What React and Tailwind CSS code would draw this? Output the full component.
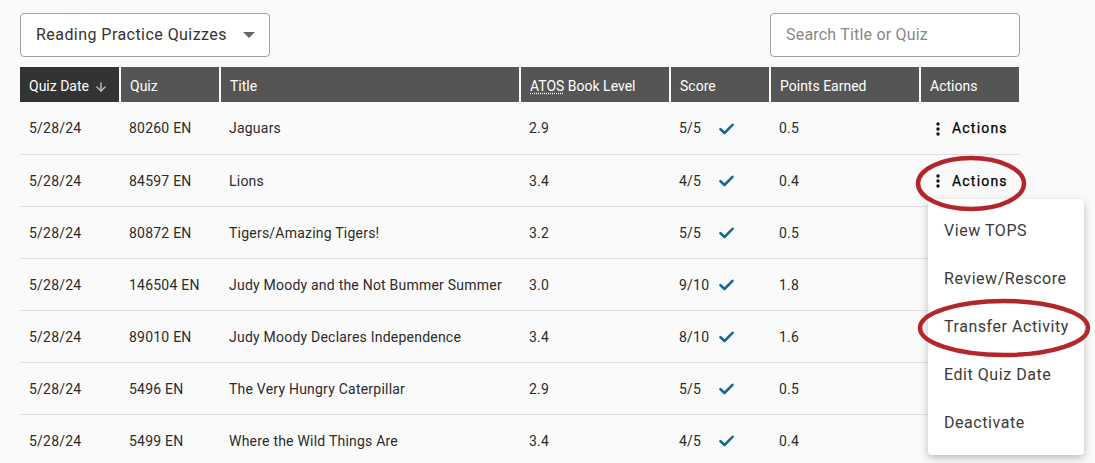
import { ArrowDown } from "lucide-react";

const rows = [
  { date: "5/28/24", quiz: "80260 EN", title: "Jaguars", level: "2.9", score: "5/5", points: "0.5" },
  { date: "5/28/24", quiz: "84597 EN", title: "Lions", level: "3.4", score: "4/5", points: "0.4" },
  { date: "5/28/24", quiz: "80872 EN", title: "Tigers/Amazing Tigers!", level: "3.2", score: "5/5", points: "0.5" },
  { date: "5/28/24", quiz: "146504 EN", title: "Judy Moody and the Not Bummer Summer", level: "3.0", score: "9/10", points: "1.8" },
  { date: "5/28/24", quiz: "89010 EN", title: "Judy Moody Declares Independence", level: "3.4", score: "8/10", points: "1.6" },
  { date: "5/28/24", quiz: "5496 EN", title: "The Very Hungry Caterpillar", level: "2.9", score: "5/5", points: "0.5" },
  { date: "5/28/24", quiz: "5499 EN", title: "Where the Wild Things Are", level: "3.4", score: "4/5", points: "0.4" },
];

const menuItems = ["View TOPS", "Review/Rescore", "Transfer Activity", "Edit Quiz Date", "Deactivate"];

const Check = () => (
  <svg width="15" height="12" viewBox="0 0 15 12" className="shrink-0">
    <path d="M1.5 6.2 L5.5 10 L13.5 1.8" fill="none" stroke="#1d6896" strokeWidth="2.6" strokeLinecap="round" strokeLinejoin="round" />
  </svg>
);

const Kebab = () => (
  <svg width="4" height="14" viewBox="0 0 4 14" className="shrink-0">
    <circle cx="2" cy="2" r="1.7" fill="#111" />
    <circle cx="2" cy="7" r="1.7" fill="#111" />
    <circle cx="2" cy="12" r="1.7" fill="#111" />
  </svg>
);

const App = () => {
  const th = "h-[35px] pl-[9px] pt-[4px] text-left font-normal text-[14px] text-white border-r-2 border-[#fafafa]";
  const td = "pl-[9px] pt-[2px] text-[14px] tracking-[0.22px] text-[#2b2b2b]";

  return (
    <div className="relative w-[1095px] h-[463px] overflow-hidden bg-[#fafafa] px-5 pt-[13px] font-['Roboto',sans-serif]">
      {/* Top controls */}
      <div className="flex w-[1000px] items-center justify-between">
        <div className="flex h-[44px] w-[250px] items-center justify-between rounded-[4px] border border-[#a0a0a0] bg-white pl-[15px] pr-[14px]">
          <span className="text-[16px] text-[#333] tracking-[0.45px]">Reading Practice Quizzes</span>
          <svg width="12" height="6" viewBox="0 0 12 6">
            <path d="M0 0 L12 0 L6 6 Z" fill="#666" />
          </svg>
        </div>
        <div className="flex h-[44px] w-[250px] items-center rounded-[4px] border border-[#a0a0a0] bg-white pl-[15px]">
          <span className="text-[16px] text-[#888] tracking-[0.2px]">Search Title or Quiz</span>
        </div>
      </div>

      {/* Table */}
      <table className="mt-[10px] w-[1000px] table-fixed border-collapse">
        <colgroup>
          <col className="w-[100px]" />
          <col className="w-[100px]" />
          <col className="w-[300px]" />
          <col className="w-[150px]" />
          <col className="w-[100px]" />
          <col className="w-[150px]" />
          <col className="w-[100px]" />
        </colgroup>
        <thead>
          <tr className="bg-[#555]">
            <th className={`${th} bg-[#333]`}>
              <span className="flex items-center gap-[5px]">
                Quiz Date
                <ArrowDown size={14} strokeWidth={2.5} className="text-[#bdbdbd]" />
              </span>
            </th>
            <th className={th}>Quiz</th>
            <th className={th}>Title</th>
            <th className={th}>
              <span className="underline decoration-dotted underline-offset-2">ATOS</span> Book Level
            </th>
            <th className={th}>Score</th>
            <th className={th}>Points Earned</th>
            <th className={`${th} border-r-0`}>Actions</th>
          </tr>
        </thead>
        <tbody>
          {rows.map((r, i) => (
            <tr key={i} className="h-[52px] border-b border-[#e0e0e0]">
              <td className={td}>{r.date}</td>
              <td className={td}>{r.quiz}</td>
              <td className={td}>{r.title}</td>
              <td className={td}>{r.level}</td>
              <td className={td}>
                <span className="flex items-center">
                  <span className="w-[40px]">{r.score}</span>
                  <Check />
                </span>
              </td>
              <td className={td}>{r.points}</td>
              <td className="pl-4 pt-[2px]">
                {i < 2 && (
                  <span className="flex items-center gap-[12px] text-[14px] font-normal tracking-[1.2px] text-black [-webkit-text-stroke:0.25px_black]">
                    <Kebab />
                    Actions
                  </span>
                )}
              </td>
            </tr>
          ))}
        </tbody>
      </table>

      {/* Open actions menu */}
      <div className="absolute left-[928px] top-[199px] w-[156px] rounded-[4px] bg-white pt-[8px] pb-[8px] shadow-[0_3px_8px_rgba(0,0,0,0.25)]">
        {menuItems.map((m) => (
          <div key={m} className="flex h-[48px] items-center pl-4 text-[16px] tracking-[0.55px] text-[#3a3a3a]">
            {m}
          </div>
        ))}
      </div>

      {/* Annotation circles */}
      <svg className="pointer-events-none absolute left-0 top-0" width="1095" height="463">
        <ellipse cx="971" cy="183.5" rx="53" ry="25.5" fill="none" stroke="#b3262a" strokeWidth="4.5" />
        <ellipse cx="1004" cy="328" rx="84" ry="27" fill="none" stroke="#b3262a" strokeWidth="4.5" />
      </svg>
    </div>
  );
};

export default App;
